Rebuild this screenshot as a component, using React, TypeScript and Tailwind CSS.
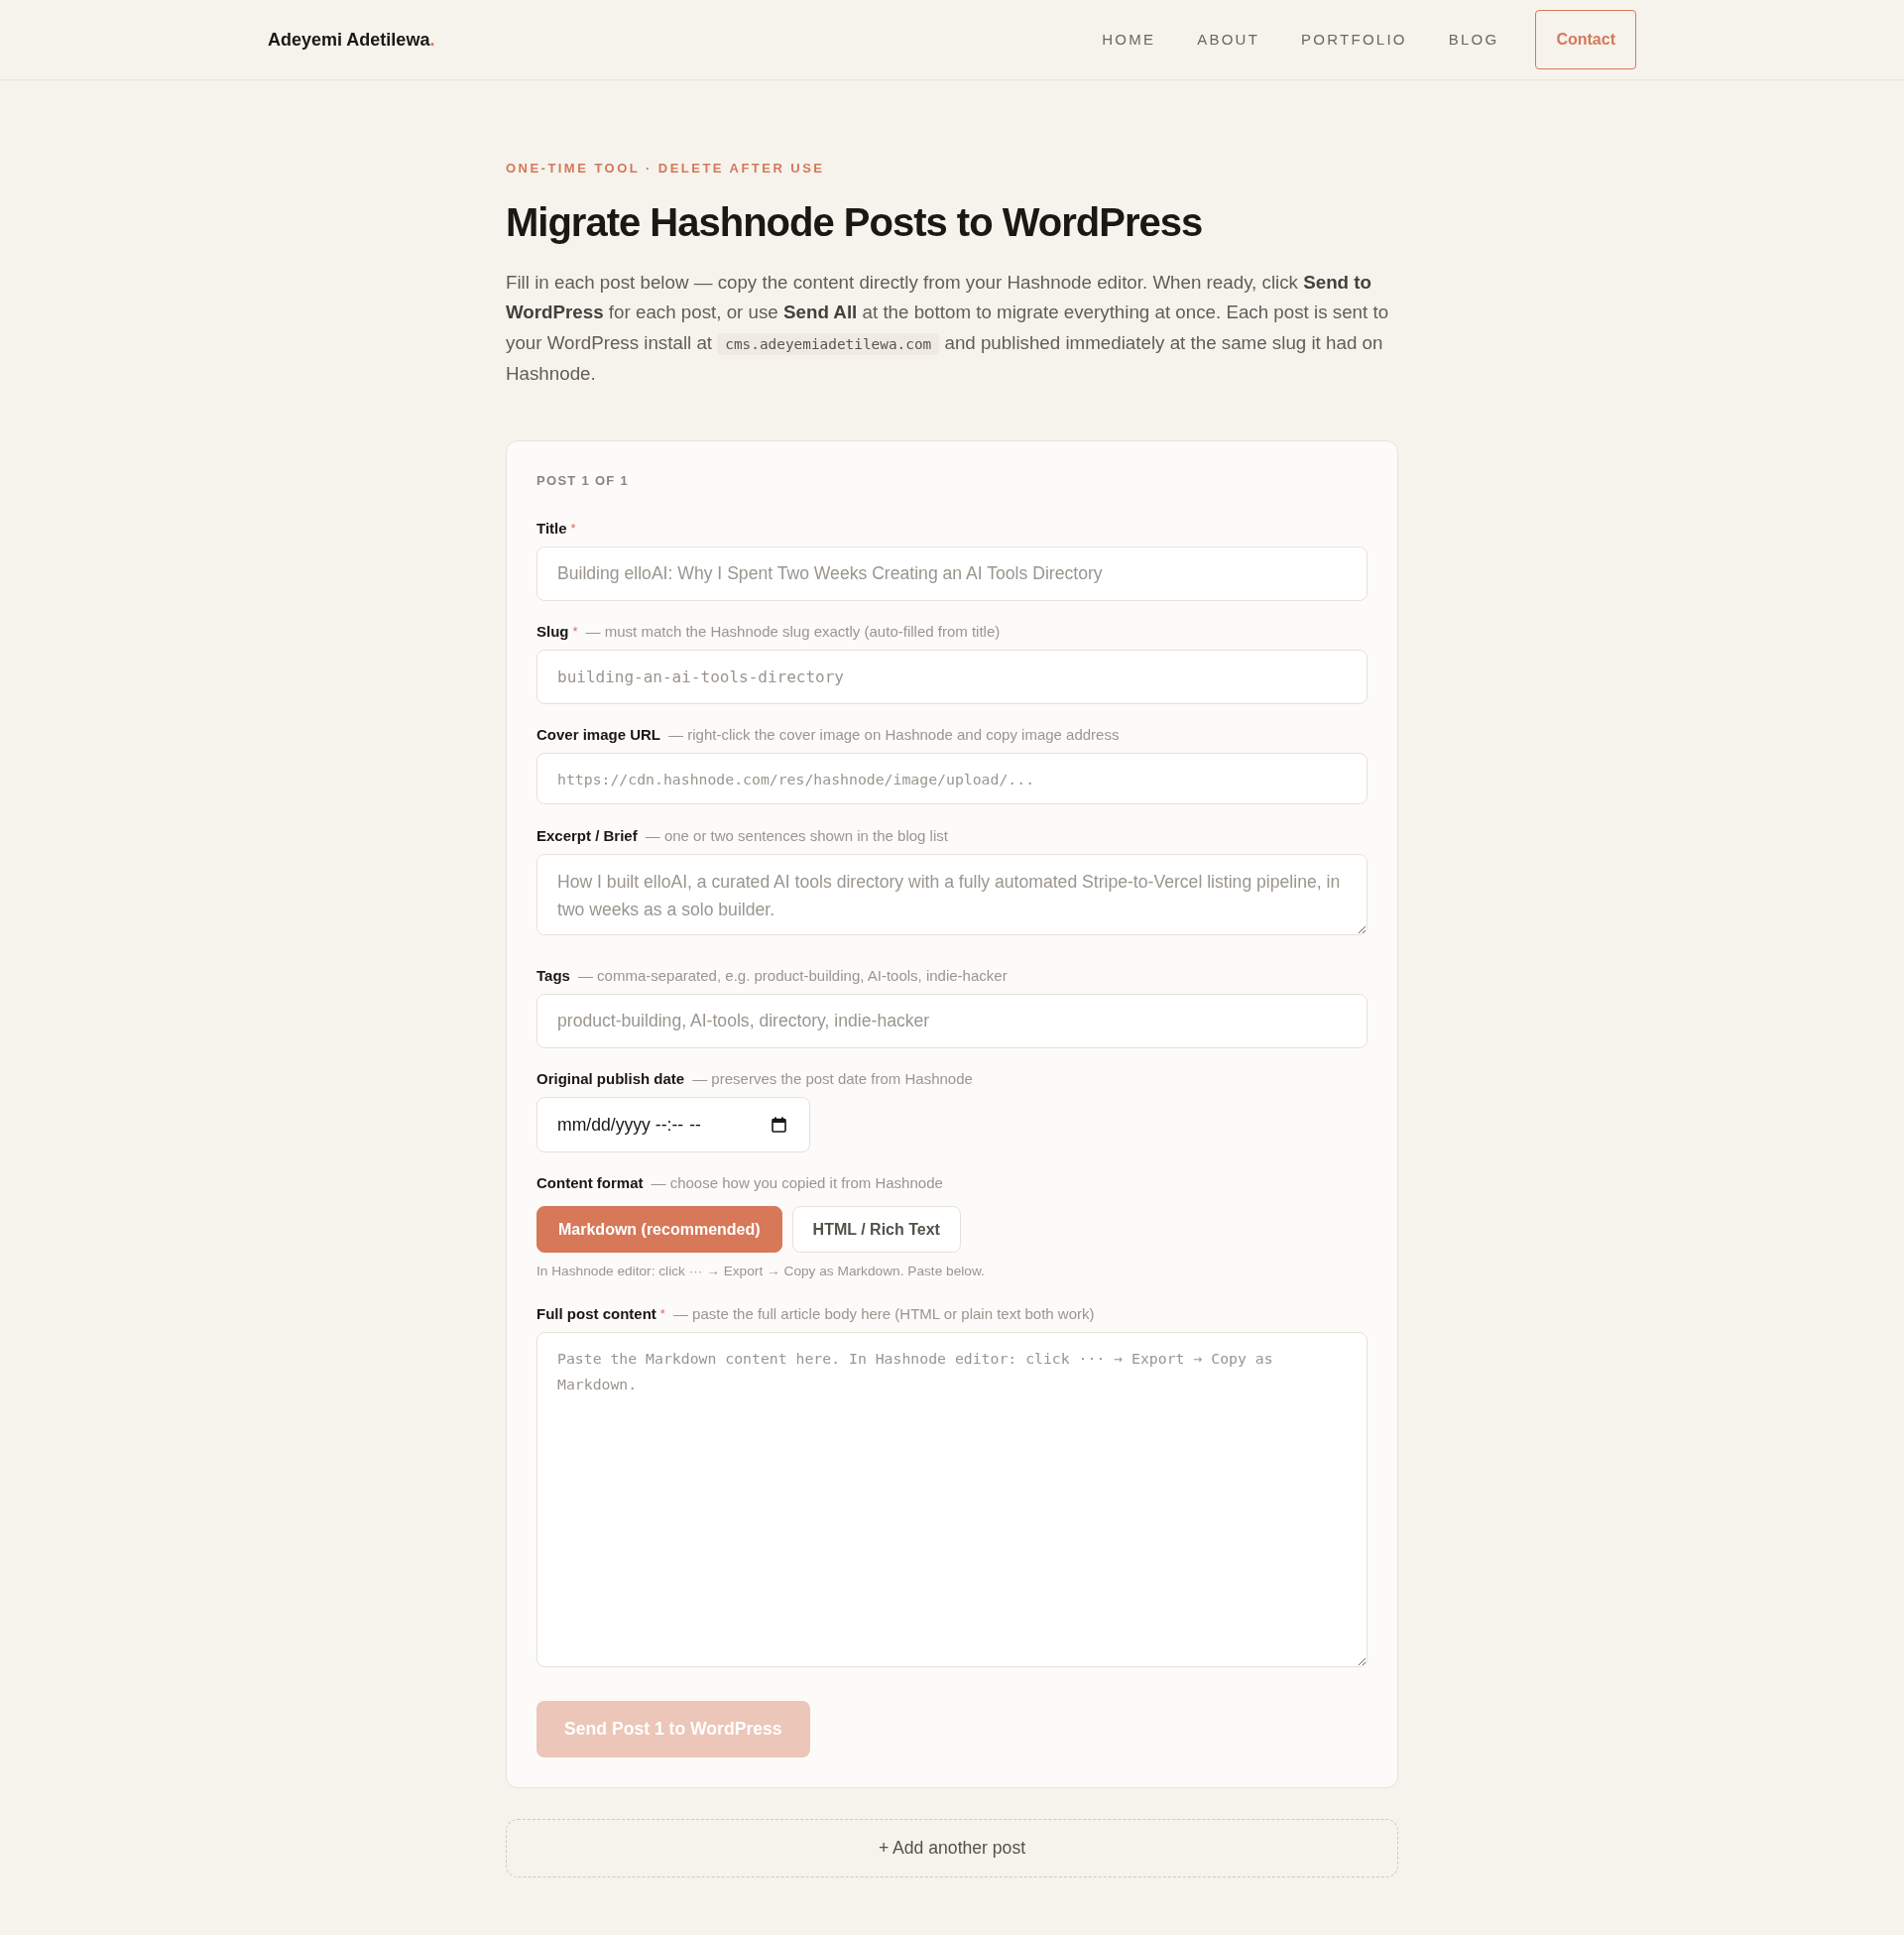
import React from "react";

const sans = "font-['Liberation_Sans',Arial,Helvetica,sans-serif]";
const mono = "font-['DejaVu_Sans_Mono','Liberation_Mono',monospace]";

function Label({
  children,
  required,
  hint,
}: {
  children: React.ReactNode;
  required?: boolean;
  hint?: string;
}) {
  return (
    <div className="mb-2 flex h-5 items-center text-[15px] leading-5">
      <span className="font-bold text-[#1a1714]">{children}</span>
      {required && <span className="ml-[4px] text-[13px] text-[#e06a5e]">*</span>}
      {hint && <span className="ml-2 text-[#9b958e]">— {hint}</span>}
    </div>
  );
}

const inputBase =
  "block w-full rounded-lg border border-[#e6e1d9] bg-white px-5 outline-none placeholder:text-[#9b958e]";

function CalendarIcon() {
  return (
    <svg width="15" height="16" viewBox="0 0 15 16" aria-hidden="true">
      <rect x="3" y="0.5" width="2" height="3" fill="#1a1714" />
      <rect x="10" y="0.5" width="2" height="3" fill="#1a1714" />
      <rect x="1" y="2.5" width="13" height="12.5" rx="1" fill="none" stroke="#1a1714" strokeWidth="1.6" />
      <rect x="1" y="2.5" width="13" height="3.5" fill="#1a1714" />
    </svg>
  );
}

export default function App() {
  return (
    <div className={`min-h-screen bg-[#f6f3ed] text-[#1a1714] ${sans}`}>
      <header className="h-[81px] border-b border-[#e8e4dc]">
        <div className="mx-auto flex h-full max-w-[1380px] items-center justify-between">
          <a href="#" className="text-[18px] font-bold text-[#1a1714]">
            Adeyemi Adetilewa<span className="text-[#d4785a]">.</span>
          </a>
          <nav className="flex items-center">
            <div className="flex items-center gap-[42px] text-[15px] tracking-[0.15em] text-[#6b665f]">
              <a href="#">HOME</a>
              <a href="#">ABOUT</a>
              <a href="#">PORTFOLIO</a>
              <a href="#">BLOG</a>
            </div>
            <a
              href="#"
              className="ml-[37px] flex h-[60px] items-center rounded border border-[#d4785a] px-5 text-[16px] font-bold text-[#d4785a]"
            >
              Contact
            </a>
          </nav>
        </div>
      </header>

      <main className="mx-auto max-w-[900px] pb-[57px] pt-[81px]">
        <p className="mb-[22px] text-[13px] font-bold leading-4 tracking-[0.19em] text-[#d4785a]">
          ONE-TIME TOOL · DELETE AFTER USE
        </p>
        <h1 className="mb-[22px] text-[40px] font-bold leading-[48px] tracking-[-0.025em] text-[#1a1714]">
          Migrate Hashnode Posts to WordPress
        </h1>
        <p className="mb-[52px] text-[18.75px] leading-[30.3px] text-[#625d57]">
          Fill in each post below — copy the content directly from your Hashnode editor. When ready, click{" "}
          <strong className="font-bold text-[#45403b]">Send to WordPress</strong> for each post, or use{" "}
          <strong className="font-bold text-[#45403b]">Send All</strong> at the bottom to migrate everything at once.
          Each post is sent to your WordPress install at{" "}
          <code className={`rounded bg-[#efebe4] px-2 py-[3px] text-[14.4px] text-[#5a554f] ${mono}`}>
            cms.adeyemiadetilewa.com
          </code>{" "}
          and published immediately at the same slug it had on Hashnode.
        </p>

        <section className="rounded-xl border border-[#e8e4dc] bg-[#fcfbf9] px-[30px] pb-[30px] pt-8">
          <p className="mb-[30px] text-[13px] font-bold leading-4 tracking-[0.1em] text-[#8a857f]">POST 1 OF 1</p>

          <div className="mb-[21px]">
            <Label required>Title</Label>
            <input
              className={`${inputBase} h-[55px] text-[17.6px]`}
              placeholder="Building elloAI: Why I Spent Two Weeks Creating an AI Tools Directory"
            />
          </div>

          <div className="mb-[21px]">
            <Label required hint="must match the Hashnode slug exactly (auto-filled from title)">
              Slug
            </Label>
            <input className={`${inputBase} h-[55px] text-[16px] ${mono}`} placeholder="building-an-ai-tools-directory" />
          </div>

          <div className="mb-[22px]">
            <Label hint="right-click the cover image on Hashnode and copy image address">Cover image URL</Label>
            <input
              className={`${inputBase} h-[52px] text-[14.8px] ${mono}`}
              placeholder="https://cdn.hashnode.com/res/hashnode/image/upload/..."
            />
          </div>

          <div className="mb-[31px]">
            <Label hint="one or two sentences shown in the blog list">Excerpt / Brief</Label>
            <textarea
              className={`${inputBase} h-[82px] resize-y py-[13px] text-[17.6px] leading-[28px]`}
              placeholder="How I built elloAI, a curated AI tools directory with a fully automated Stripe-to-Vercel listing pipeline, in two weeks as a solo builder."
            />
          </div>

          <div className="mb-[21px]">
            <Label hint="comma-separated, e.g. product-building, AI-tools, indie-hacker">Tags</Label>
            <input
              className={`${inputBase} h-[55px] text-[17.6px]`}
              placeholder="product-building, AI-tools, directory, indie-hacker"
            />
          </div>

          <div className="mb-[21px]">
            <Label hint="preserves the post date from Hashnode">Original publish date</Label>
            <div
              role="textbox"
              className="flex h-[56px] w-[276px] items-center justify-between rounded-lg border border-[#e6e1d9] bg-white pl-5 pr-[23px] text-[17.6px] text-[#1a1714]"
            >
              <span className="flex items-center">
                <span>mm/dd/yyyy</span>
                <span className="ml-[5px]">--:--</span>
                <span className="ml-[6px]">--</span>
              </span>
              <CalendarIcon />
            </div>
          </div>

          <div className="mb-[24px]">
            <Label hint="choose how you copied it from Hashnode">Content format</Label>
            <div className="mt-[13px] flex gap-[10px]">
              <button className="h-[47px] rounded-lg border border-[#d77858] bg-[#d77858] px-[21px] text-[16px] font-bold text-white">
                Markdown (recommended)
              </button>
              <button className="h-[47px] rounded-lg border border-[#e6e1d9] bg-white px-5 text-[16px] font-bold text-[#55504a]">
                HTML / Rich Text
              </button>
            </div>
            <p className="mt-[10px] text-[13.7px] leading-[18px] text-[#9b958e]">
              In Hashnode editor: click ··· → Export → Copy as Markdown. Paste below.
            </p>
          </div>

          <div className="mb-[34px]">
            <Label required hint="paste the full article body here (HTML or plain text both work)">
              Full post content
            </Label>
            <textarea
              className={`${inputBase} h-[338px] resize-y py-[13px] text-[14.8px] leading-[26px] ${mono}`}
              placeholder="Paste the Markdown content here. In Hashnode editor: click ··· → Export → Copy as Markdown."
            />
          </div>

          <button
            disabled
            className="h-[57px] rounded-lg bg-[#ecc6b8] px-7 text-[17.6px] font-bold text-white"
          >
            Send Post 1 to WordPress
          </button>
        </section>

        <button className="mt-[31px] flex h-[59px] w-full items-center justify-center rounded-xl border border-dashed border-[#cfcac2] text-[17.6px] text-[#55504a]">
          + Add another post
        </button>
      </main>
    </div>
  );
}
